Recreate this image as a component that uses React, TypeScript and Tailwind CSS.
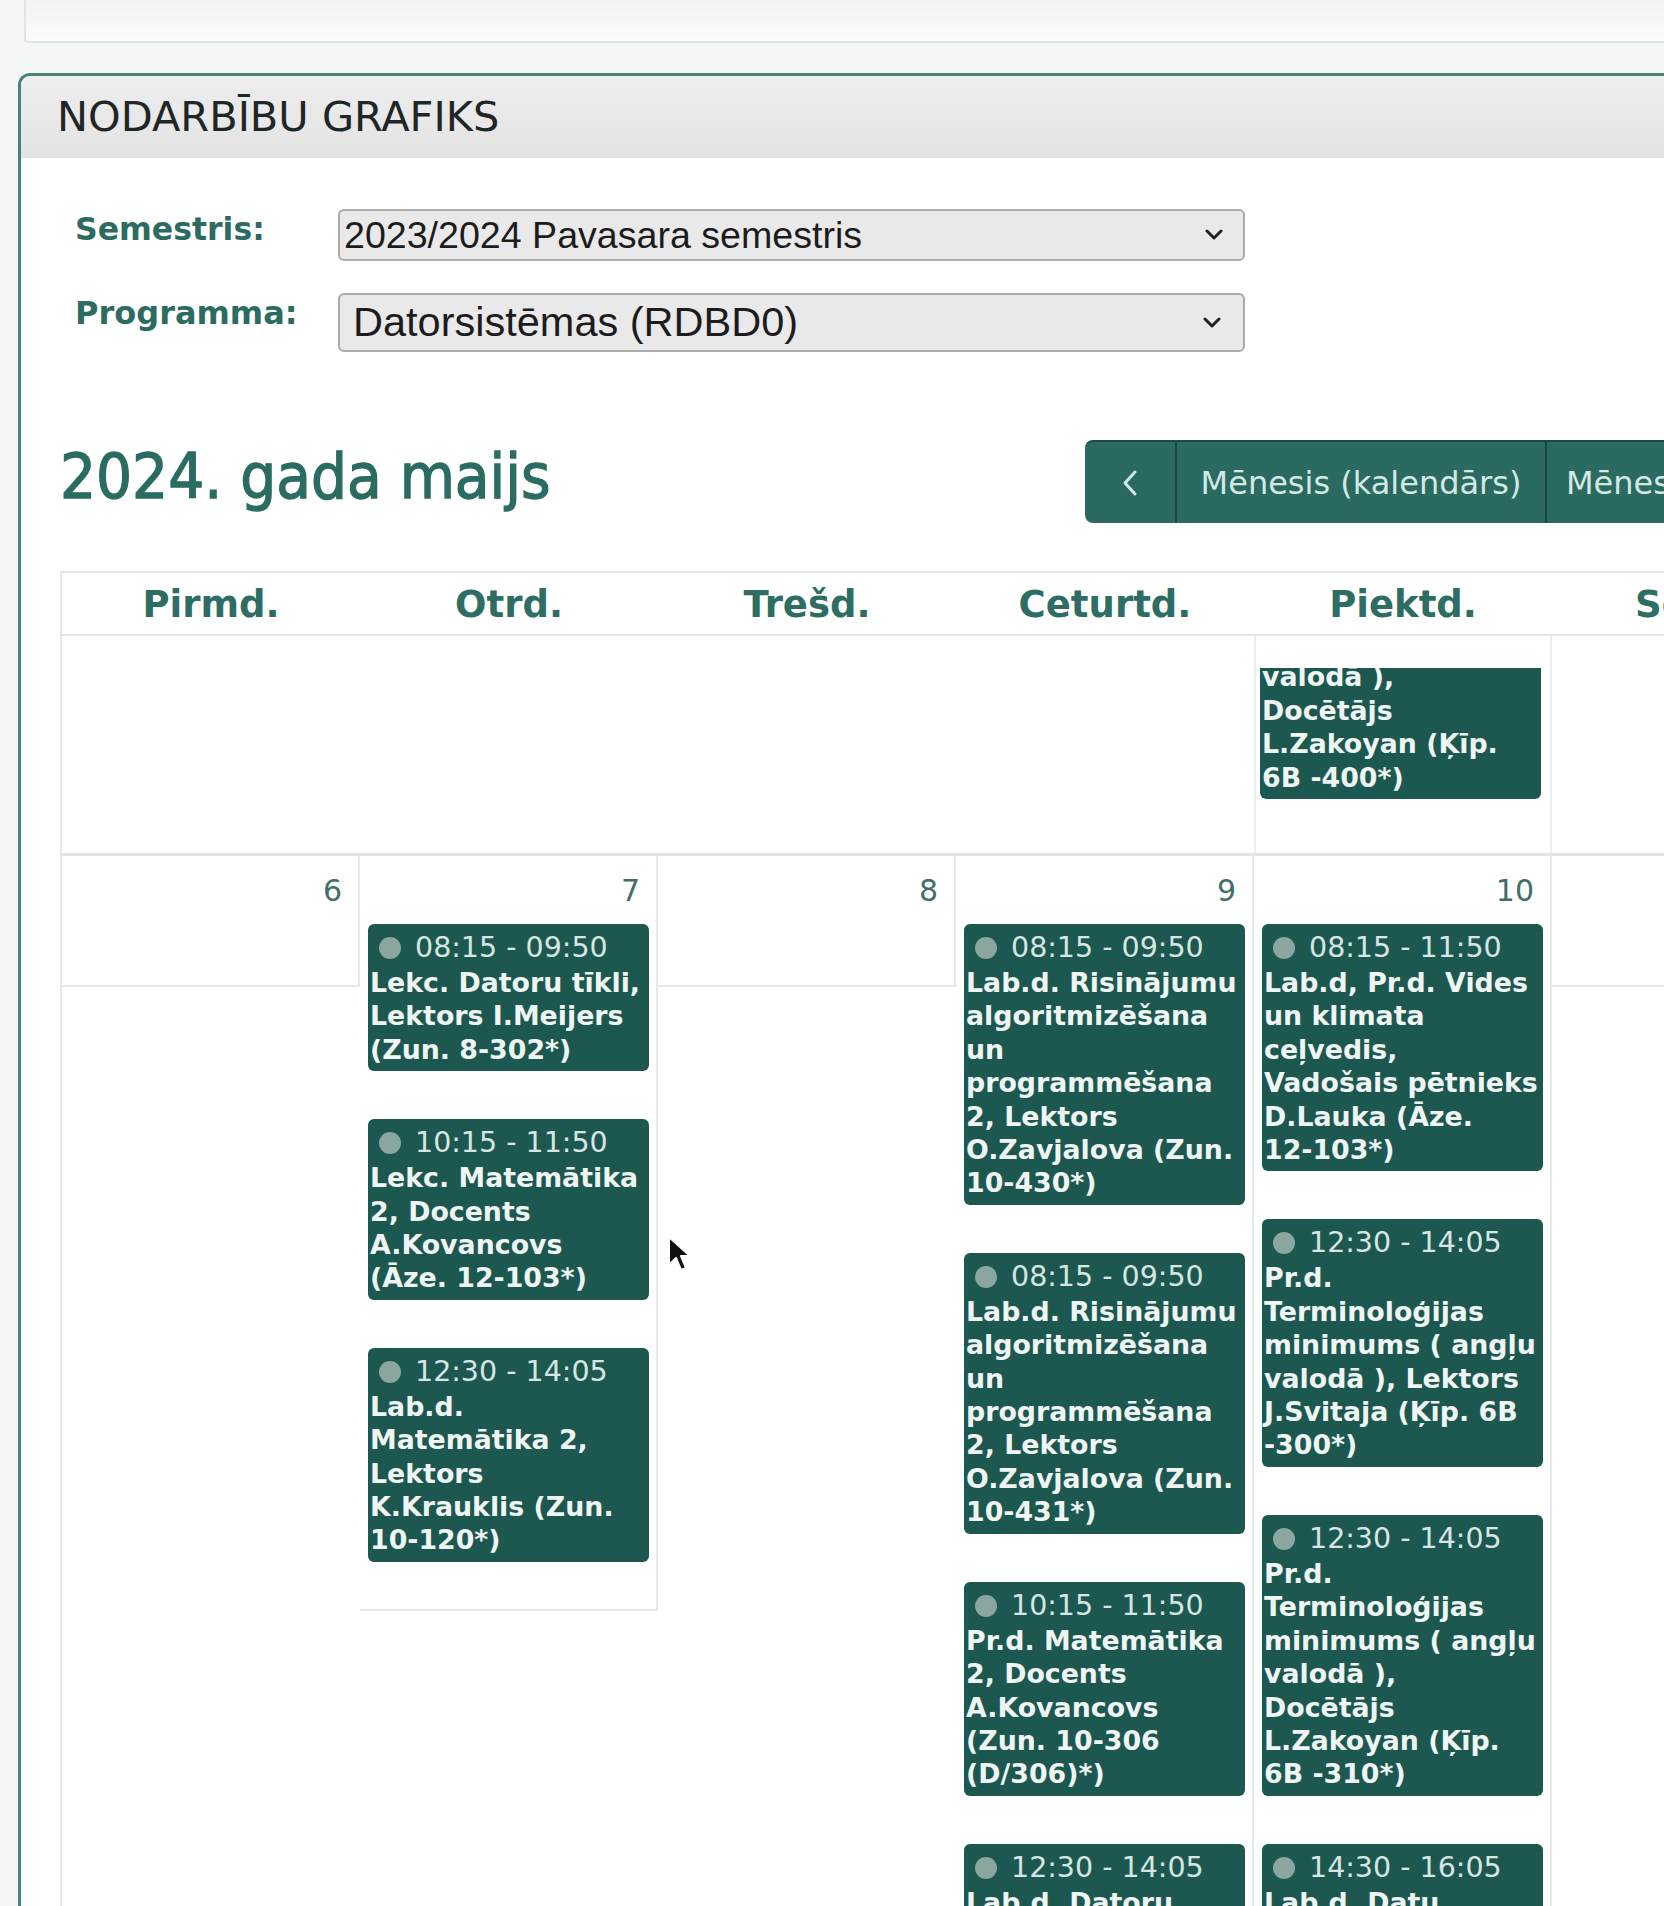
import React from 'react';

type Lesson = { time: string; lines: string[] };

const DAY_NAMES = ['Pirmd.', 'Otrd.', 'Trešd.', 'Ceturtd.', 'Piektd.', 'Sestd.', 'Svētd.'];

// the tail of last week's Friday, scrolled mostly out of view
const prevFriday: Lesson = {
  time: '12:30 - 14:05',
  lines: ['Pr.d.', 'Terminoloģijas', 'minimums ( angļu', 'valodā ),', 'Docētājs', 'L.Zakoyan (Ķīp.', '6B -400*)'],
};

const week: { day: number; lessons: Lesson[] }[] = [
  { day: 6, lessons: [] },
  {
    day: 7,
    lessons: [
      { time: '08:15 - 09:50', lines: ['Lekc. Datoru tīkli,', 'Lektors I.Meijers', '(Zun. 8-302*)'] },
      { time: '10:15 - 11:50', lines: ['Lekc. Matemātika', '2, Docents', 'A.Kovancovs', '(Āze. 12-103*)'] },
      { time: '12:30 - 14:05', lines: ['Lab.d.', 'Matemātika 2,', 'Lektors', 'K.Krauklis (Zun.', '10-120*)'] },
    ],
  },
  { day: 8, lessons: [] },
  {
    day: 9,
    lessons: [
      {
        time: '08:15 - 09:50',
        lines: ['Lab.d. Risinājumu', 'algoritmizēšana', 'un', 'programmēšana', '2, Lektors', 'O.Zavjalova (Zun.', '10-430*)'],
      },
      {
        time: '08:15 - 09:50',
        lines: ['Lab.d. Risinājumu', 'algoritmizēšana', 'un', 'programmēšana', '2, Lektors', 'O.Zavjalova (Zun.', '10-431*)'],
      },
      { time: '10:15 - 11:50', lines: ['Pr.d. Matemātika', '2, Docents', 'A.Kovancovs', '(Zun. 10-306', '(D/306)*)'] },
      { time: '12:30 - 14:05', lines: ['Lab.d. Datoru', 'tīkli, Lektors', 'I.Meijers (Zun.', '8-302*)'] },
    ],
  },
  {
    day: 10,
    lessons: [
      {
        time: '08:15 - 11:50',
        lines: ['Lab.d, Pr.d. Vides', 'un klimata', 'ceļvedis,', 'Vadošais pētnieks', 'D.Lauka (Āze.', '12-103*)'],
      },
      {
        time: '12:30 - 14:05',
        lines: ['Pr.d.', 'Terminoloģijas', 'minimums ( angļu', 'valodā ), Lektors', 'J.Svitaja (Ķīp. 6B', '-300*)'],
      },
      {
        time: '12:30 - 14:05',
        lines: ['Pr.d.', 'Terminoloģijas', 'minimums ( angļu', 'valodā ),', 'Docētājs', 'L.Zakoyan (Ķīp.', '6B -310*)'],
      },
      { time: '14:30 - 16:05', lines: ['Lab.d. Datu', 'bāzes, Lektors', 'A.Jansons (Zun.', '8-301*)'] },
    ],
  },
  { day: 11, lessons: [] },
  { day: 12, lessons: [] },
];

const LessonCard: React.FC<{ lesson: Lesson }> = ({ lesson }) => (
  <div className="w-[281px] rounded-[6px] bg-[#1d5850] pb-[5px] pl-[2px] pt-[6px] text-[#eef5f3]">
    <div className="flex items-center pl-[9px] text-[28.5px] leading-[36px] text-[#d7e6e2]">
      <span className="mr-[14px] h-[22px] w-[22px] shrink-0 rounded-full bg-[#8aa69f]" />
      {lesson.time}
    </div>
    {lesson.lines.map((line, i) => (
      <div key={i} className="whitespace-nowrap text-[26.8px] font-bold leading-[33.4px]">
        {line}
      </div>
    ))}
  </div>
);

const Chevron: React.FC = () => (
  <svg width="18" height="12" viewBox="0 0 18 12" className="shrink-0">
    <polyline points="2,2 9,9 16,2" fill="none" stroke="#222" strokeWidth="3" strokeLinecap="round" strokeLinejoin="round" />
  </svg>
);

export default function App() {
  return (
    <div className="relative h-[1906px] w-[1664px] overflow-hidden bg-[#f4f7f7] font-['DejaVu_Sans',sans-serif]">
      {/* bottom edge of the card above */}
      <div className="ml-[24px] h-[43px] rounded-bl-[4px] border-b-2 border-l-2 border-[#e2e4e4] bg-gradient-to-b from-[#f1f2f2] to-[#fcfcfc]" />

      {/* Schedule panel */}
      <div className="ml-[18px] mt-[30px] w-[2100px] rounded-tl-[12px] border-l-[3px] border-t-[3px] border-[#4d8076] bg-white pb-[200px]">
        <div className="flex h-[82px] items-center rounded-tl-[9px] bg-gradient-to-b from-[#eeeeee] to-[#e3e3e3] pl-[36px] text-[41.5px] text-[#1f2626]">
          NODARBĪBU GRAFIKS
        </div>

        {/* Filters */}
        <div className="pl-[54px] pt-[51px]">
          <div className="flex items-start">
            <div className="w-[263px] text-[31.5px] font-bold leading-[40px] text-[#2c6b62]">Semestris:</div>
            <div className="flex h-[52px] w-[907px] items-center justify-between rounded-[6px] border-2 border-[#ababab] bg-[#e9e9ea] pl-[4px] pr-[20px] font-['Liberation_Sans',Arial,sans-serif] text-[37.6px] text-[#1c1c1c]">
              <span>2023/2024 Pavasara semestris</span>
              <Chevron />
            </div>
          </div>
          <div className="mt-[32px] flex items-start">
            <div className="w-[263px] text-[32px] font-bold leading-[40px] text-[#2c6b62]">Programma:</div>
            <div className="flex h-[59px] w-[907px] items-center justify-between rounded-[6px] border-2 border-[#ababab] bg-[#e9e9ea] pl-[13px] pr-[22px] font-['Liberation_Sans',Arial,sans-serif] text-[41.5px] text-[#1c1c1c]">
              <span>Datorsistēmas (RDBD0)</span>
              <Chevron />
            </div>
          </div>
        </div>

        {/* Month title + view switch */}
        <div className="ml-[39px] mt-[88px] flex h-[83px] items-center">
          <div className="mb-[10px] w-[1025px] font-['DejaVu_Sans_Condensed','DejaVu_Sans',sans-serif] text-[63px] leading-none text-[#2b6c62] [-webkit-text-stroke:1.3px_#2b6c62]">
            2024. gada maijs
          </div>
          <div className="flex h-[83px] rounded-l-[8px] border-t-2 border-[#1c4a43] bg-[#2b6a60] text-[32px] text-[#d3e9e4]">
            <div className="flex w-[92px] items-center justify-center border-r-2 border-[#1b463f]">
              <svg width="16" height="28" viewBox="0 0 16 28">
                <polyline points="13,3 3,14 13,25" fill="none" stroke="#d3e9e4" strokeWidth="3" strokeLinecap="round" strokeLinejoin="round" />
              </svg>
            </div>
            <div className="flex w-[370px] items-center justify-center border-r-2 border-[#1b463f]">Mēnesis (kalendārs)</div>
            <div className="flex items-center whitespace-nowrap pl-[19px] pr-[40px]">Mēnesis (saraksts)</div>
          </div>
        </div>

        {/* Calendar */}
        <div className="ml-[39px] mt-[48px] border-l-2 border-t-2 border-[#e6e8e8]">
          <div className="flex h-[63px] border-b-2 border-[#e4e6e6]">
            {DAY_NAMES.map((name) => (
              <div key={name} className="w-[298px] shrink-0 pt-[2px] text-center text-[37px] font-bold leading-[59px] text-[#2d6d63]">
                {name}
              </div>
            ))}
          </div>

          {/* previous week, scrolled */}
          <div className="flex h-[220px] border-b-[3px] border-[#e2e4e4]">
            {DAY_NAMES.map((name, i) => (
              <div key={name} className={`w-[298px] shrink-0 ${i === 4 ? 'border-x-2 border-[#eceeee]' : ''}`}>
                {i === 4 && (
                  <div className="ml-[4px] mt-[32px] flex h-[131px] flex-col justify-end overflow-hidden rounded-b-[6px]">
                    <LessonCard lesson={prevFriday} />
                  </div>
                )}
              </div>
            ))}
          </div>

          {/* current week */}
          <div className="flex items-start">
            {week.map((cell) => (
              <div
                key={cell.day}
                className={`min-h-[131px] w-[298px] shrink-0 border-b-2 border-r-2 border-[#e6e8e8] ${
                  cell.lessons.length > 0 ? 'pb-[47px]' : ''
                }`}
              >
                <div className="pr-[16px] pt-[16px] text-right text-[30px] leading-[38px] text-[#3f6f68]">{cell.day}</div>
                {cell.lessons.length > 0 && (
                  <div className="ml-[8px] mt-[14px] flex flex-col gap-[48px]">
                    {cell.lessons.map((lesson, i) => (
                      <LessonCard key={i} lesson={lesson} />
                    ))}
                  </div>
                )}
              </div>
            ))}
          </div>
        </div>
      </div>

      {/* mouse pointer */}
      <svg className="absolute left-[667px] top-[1235px]" width="26" height="38" viewBox="0 0 26 38">
        <path d="M2 2 L2 30 L9 23 L14 35 L19 33 L14 21 L23 21 Z" fill="#111" stroke="#fff" strokeWidth="2" strokeLinejoin="round" />
      </svg>
    </div>
  );
}
